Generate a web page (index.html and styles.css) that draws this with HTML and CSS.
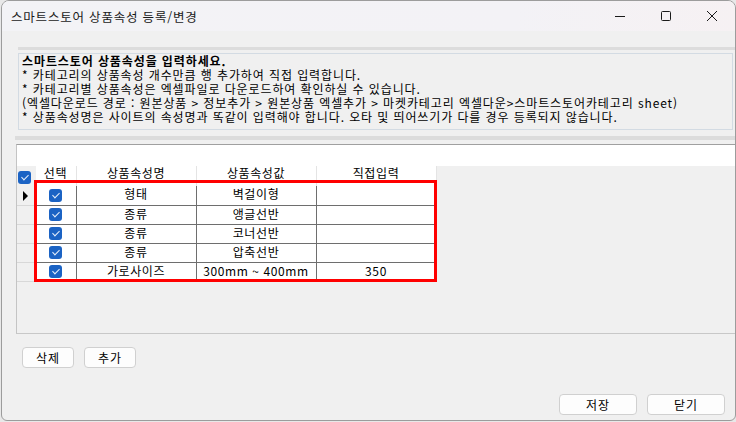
FILE: index.html
```html
<!DOCTYPE html>
<html lang="ko">
<head>
  <meta charset="UTF-8">
  <title>스마트스토어 상품속성 등록/변경</title>
  <link rel="stylesheet" href="styles.css">
</head>
<body>
  <div class="window">
    <!-- Title bar -->
    <div class="titlebar">
      <span class="title">스마트스토어 상품속성 등록/변경</span>
      <div class="controls">
        <span class="ctl"><svg width="12" height="12" viewBox="0 0 12 12"><path d="M1 6.5h10" stroke="#1a1a1a" stroke-width="1"/></svg></span>
        <span class="ctl"><svg width="12" height="12" viewBox="0 0 12 12"><rect x="1.5" y="1.5" width="9" height="9" rx="1" fill="none" stroke="#1a1a1a" stroke-width="1"/></svg></span>
        <span class="ctl"><svg width="12" height="12" viewBox="0 0 12 12"><path d="M1 1l10 10M11 1L1 11" stroke="#1a1a1a" stroke-width="1"/></svg></span>
      </div>
    </div>

    <div class="content">
      <div class="bar bar-top"></div>
      <div class="info">
        <p class="info-head">스마트스토어 상품속성을 입력하세요.</p>
        <p>* 카테고리의 상품속성 개수만큼 행 추가하여 직접 입력합니다.</p>
        <p>* 카테고리별 상품속성은 엑셀파일로 다운로드하여 확인하실 수 있습니다.</p>
        <p>(엑셀다운로드 경로 : 원본상품 &gt; 정보추가 &gt; 원본상품 엑셀추가 &gt; 마켓카테고리 엑셀다운&gt;스마트스토어카테고리 sheet)</p>
        <p>* 상품속성명은 사이트의 속성명과 똑같이 입력해야 합니다. 오타 및 띄어쓰기가 다를 경우 등록되지 않습니다.</p>
      </div>

      <div class="bar bar-grid"></div>
      <div class="grid">
        <div class="grid-strip"></div>
        <table class="attr-table">
          <thead>
            <tr>
              <th class="rowhead"><span class="chk"></span></th>
              <th class="c-sel">선택</th>
              <th class="c-col">상품속성명</th>
              <th class="c-col">상품속성값</th>
              <th class="c-col">직접입력</th>
            </tr>
          </thead>
          <tbody>
            <tr>
              <td class="rowhead"><span class="cur"></span></td>
              <td><span class="chk"></span></td>
              <td>형태</td>
              <td>벽걸이형</td>
              <td></td>
            </tr>
            <tr>
              <td class="rowhead"></td>
              <td><span class="chk"></span></td>
              <td>종류</td>
              <td>앵글선반</td>
              <td></td>
            </tr>
            <tr>
              <td class="rowhead"></td>
              <td><span class="chk"></span></td>
              <td>종류</td>
              <td>코너선반</td>
              <td></td>
            </tr>
            <tr>
              <td class="rowhead"></td>
              <td><span class="chk"></span></td>
              <td>종류</td>
              <td>압축선반</td>
              <td></td>
            </tr>
            <tr>
              <td class="rowhead"></td>
              <td><span class="chk"></span></td>
              <td>가로사이즈</td>
              <td>300mm ~ 400mm</td>
              <td>350</td>
            </tr>
          </tbody>
        </table>
        <!-- red highlight box drawn over the rows -->
        <div class="highlight"></div>
      </div>

      <div class="row-buttons">
        <button class="btn btn-small">삭제</button>
        <button class="btn btn-small">추가</button>
      </div>

      <div class="bottom-buttons">
        <button class="btn btn-wide">저장</button>
        <button class="btn btn-wide">닫기</button>
      </div>
    </div>
  </div>
</body>
</html>
```

FILE: styles.css
```css
/* Reset */
* {
  margin: 0;
  padding: 0;
  box-sizing: border-box;
}

body {
  width: 736px;
  height: 422px;
  background: #e8e8e8;
  font-family: "Noto Sans CJK KR", "Noto Sans", sans-serif;
  font-size: 12px;
  color: #000;
  overflow: hidden;
}

/* Window frame */
.window {
  width: 735px;
  height: 421px;
  margin-left: 1px;
  border: 1px solid #9c9c9c;
  border-radius: 8px 8px 6px 6px;
  background: #f0f0f0;
  overflow: hidden;
  display: flex;
  flex-direction: column;
}

.titlebar {
  height: 30px;
  flex: none;
  display: flex;
  align-items: center;
  justify-content: space-between;
  background: linear-gradient(90deg, #f3f3f6, #f3f2f6 70%, #f6f1f3);
}

.title {
  padding-left: 9px;
  font-size: 12.5px;
  color: #1a1a1a;
  letter-spacing: 0.8px;
}

.controls {
  display: flex;
  height: 100%;
}

.ctl {
  width: 46px;
  display: flex;
  align-items: center;
  justify-content: center;
}

/* Content area */
.content {
  flex: 1;
  display: flex;
  flex-direction: column;
}

.bar {
  height: 3px;
  background: #dcdcdc;
}

.bar-top {
  margin: 16px 0 3px 16px;
}

/* Info box */
.info {
  margin: 0 2px 0 16px;
  height: 77px;
  border: 1px solid #d3dbe3;
  padding: 0 0 0 3px;
  line-height: 14px;
  font-size: 12px;
  letter-spacing: 0.9px;
  white-space: nowrap;
}

.info-head {
  font-weight: bold;
}

.bar-grid {
  margin: 6px 0 4px 13px;
  height: 4px;
}

/* Grid */
.grid {
  position: relative;
  margin-left: 14px;
  height: 190px;
  border-top: 1px solid #a0a0a0;
  border-left: 1px solid #c4c4c4;
  border-bottom: 1px solid #c8c8c8;
  background: #f0f0f0;
}

.grid-strip {
  height: 21px;
  background: #fff;
}

.attr-table {
  border-collapse: collapse;
  table-layout: fixed;
  width: 419px;
  background: #fff;
}

.attr-table th,
.attr-table td {
  text-align: center;
  font-weight: normal;
  padding: 0;
  white-space: nowrap;
  letter-spacing: 0.6px;
}

.attr-table th {
  height: 20px;
  line-height: 14px;
  border-right: 1px solid #e4e4e4;
  vertical-align: top;
}

.attr-table td {
  height: 19px;
  line-height: 14px;
  padding-bottom: 2px;
  border-right: 1px solid #6e6e6e;
  border-bottom: 1px solid #6e6e6e;
}

.attr-table .rowhead {
  width: 18px;
  background: #f0f0f0;
  border-right: 1px solid #6e6e6e;
}

.attr-table td.rowhead {
  border-bottom: 1px solid #d8d8d8;
}

.attr-table th.rowhead {
  text-align: left;
  padding: 3px 0 0 1px;
  border-right-color: #f0f0f0;
}

.c-sel {
  width: 41px;
}

.c-col {
  width: 120px;
}

/* Checkbox */
.chk {
  position: relative;
  display: inline-block;
  width: 13px;
  height: 13px;
  border-radius: 3px;
  background: #1b63c4;
  vertical-align: middle;
}

.chk::after {
  content: '';
  position: absolute;
  left: 4.5px;
  top: 2px;
  width: 3px;
  height: 6px;
  border: solid #e8f0fb;
  border-width: 0 1px 1px 0;
  transform: rotate(45deg);
}

/* current row marker */
.cur {
  display: inline-block;
  width: 0;
  height: 0;
  border-left: 5px solid #000;
  border-top: 5px solid transparent;
  border-bottom: 5px solid transparent;
  vertical-align: middle;
}

.highlight {
  position: absolute;
  left: 17px;
  top: 35px;
  width: 403px;
  height: 102px;
  border: 3px solid #f00;
}

/* Buttons */
.btn {
  height: 21px;
  background: #fdfdfd;
  border: 1px solid #d0d0d0;
  border-radius: 4px;
  font-family: "Noto Sans CJK KR", sans-serif;
  font-size: 12px;
  letter-spacing: 1px;
  color: #000;
}

.row-buttons {
  display: flex;
  gap: 10px;
  margin: 13px 0 0 20px;
}

.btn-small {
  width: 52px;
}

.bottom-buttons {
  display: flex;
  justify-content: flex-end;
  gap: 10px;
  margin: 26px 10px 0 0;
}

.btn-wide {
  width: 78px;
}
```
